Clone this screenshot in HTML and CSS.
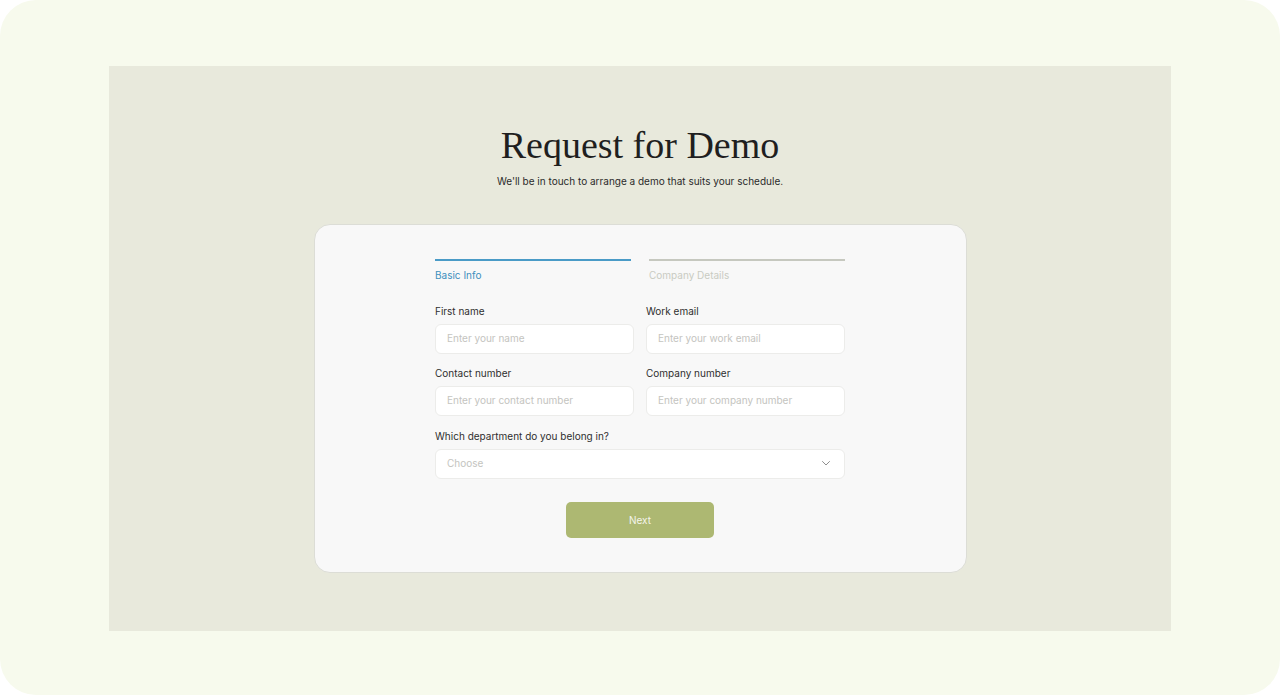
FILE: index.html
```html
<!DOCTYPE html>
<html lang="en">
<head>
  <meta charset="UTF-8">
  <meta name="viewport" content="width=device-width, initial-scale=1.0">
  <title>Request for Demo</title>
  <link rel="stylesheet" href="styles.css">
</head>
<body>
  <div class="frame">
    <div class="panel">
      <h1>Request for Demo</h1>
      <p class="lead">We'll be in touch to arrange a demo that suits your schedule.</p>

      <form class="card">
        <div class="form-inner">
          <!-- Steps -->
          <div class="steps">
            <div class="step active">Basic Info</div>
            <div class="step">Company Details</div>
          </div>

          <div class="grid">
            <label class="field">
              <span>First name</span>
              <input type="text" placeholder="Enter your name">
            </label>
            <label class="field">
              <span>Work email</span>
              <input type="email" placeholder="Enter your work email">
            </label>
            <label class="field">
              <span>Contact number</span>
              <input type="text" placeholder="Enter your contact number">
            </label>
            <label class="field">
              <span>Company number</span>
              <input type="text" placeholder="Enter your company number">
            </label>
            <label class="field wide">
              <span>Which department do you belong in?</span>
              <div class="select">
                <span class="placeholder">Choose</span>
                <svg width="8" height="5" viewBox="0 0 8 5" fill="none">
                  <path d="M0.5 0.5l3.5 3.5 3.5-3.5" stroke="#8f8f8f" stroke-width="1" stroke-linecap="round" stroke-linejoin="round"/>
                </svg>
              </div>
            </label>
          </div>

          <div class="actions">
            <button type="button" class="next">Next</button>
          </div>
        </div>
      </form>
    </div>
  </div>
</body>
</html>
```

FILE: styles.css
```css
* {
  margin: 0;
  padding: 0;
  box-sizing: border-box;
}
body {
  background: #ffffff;
  font-family: 'Inter', 'Open Sans', sans-serif;
  color: #2b2b2b;
  width: 1280px;
  height: 695px;
  overflow: hidden;
}
/* outer rounded frame */
.frame {
  width: 1280px;
  height: 695px;
  background: #f7faed;
  border-radius: 36px;
  padding: 66px 109px 64px;
}
.panel {
  height: 565px;
  background: #e8e9dc;
  display: flex;
  flex-direction: column;
  align-items: center;
  padding-top: 57px;
}
h1 {
  font-family: 'Liberation Serif', serif;
  font-weight: 400;
  font-size: 38px;
  line-height: 44px;
  color: #1f1f1f;
  letter-spacing: 0;
}
.lead {
  font-size: 10px;
  line-height: 14px;
  margin-top: 7px;
  color: #2b2b2b;
}
/* card */
.card {
  margin-top: 36px;
  width: 653px;
  height: 349px;
  background: #f8f8f8;
  border: 1px solid #dcddd6;
  border-radius: 16px;
  display: flex;
  justify-content: center;
  padding-top: 34px;
}
.form-inner {
  width: 410px;
}
.steps {
  display: flex;
  gap: 18px;
}
.step {
  flex: 1;
  border-top: 2px solid #c6c8bf;
  padding-top: 7px;
  font-size: 10px;
  line-height: 14px;
  color: #c9cbc2;
}
.step.active {
  border-top-color: #4a9bc7;
  color: #3d8fbd;
}
.grid {
  display: grid;
  grid-template-columns: 199px 199px;
  column-gap: 12px;
  row-gap: 12px;
  margin-top: 22px;
}
.field {
  display: flex;
  flex-direction: column;
  gap: 6px;
}
.field > span {
  font-size: 10px;
  line-height: 14px;
  color: #2f2f2f;
}
.field.wide {
  grid-column: 1 / 3;
  margin-top: 1px;
}
input,
.select {
  height: 30px;
  background: #ffffff;
  border: 1px solid #ececea;
  border-radius: 6px;
  padding: 0 11px 2px;
  font-family: inherit;
  font-size: 10px;
  color: #2f2f2f;
  outline: none;
}
input::placeholder,
.select .placeholder {
  color: #c4c4c0;
}
.select {
  display: flex;
  align-items: center;
  justify-content: space-between;
  padding-right: 14px;
}
.actions {
  display: flex;
  justify-content: center;
  margin-top: 23px;
}
.next {
  width: 148px;
  height: 36px;
  border: none;
  border-radius: 5px;
  background: #adb872;
  color: #f4f5ec;
  font-family: inherit;
  font-size: 10px;
  padding-bottom: 1px;
  cursor: pointer;
}
```
